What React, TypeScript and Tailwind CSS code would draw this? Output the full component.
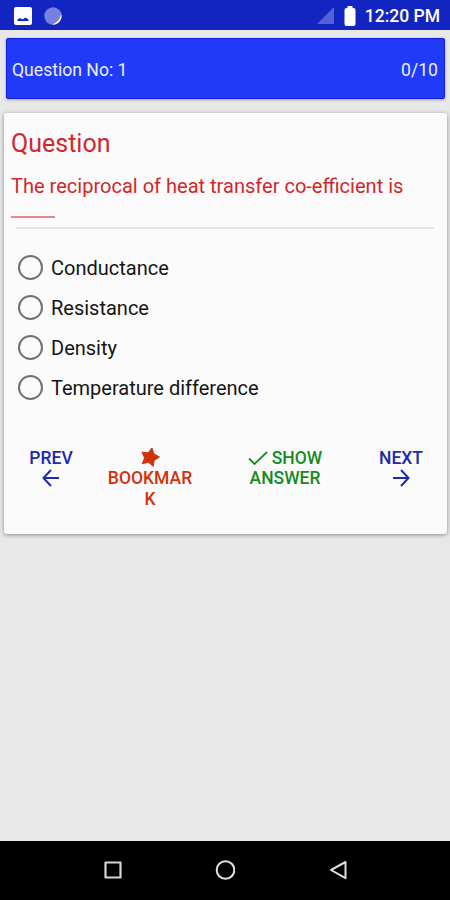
import { useState } from 'react'
import type { ReactNode } from 'react'

const options = [
  'Conductance',
  'Resistance',
  'Density',
  'Temperature difference'
]

function StatusBar() {
  return (
    <div className="flex h-[30px] items-center justify-between bg-[#1325c1] pl-[14px] pr-[10px] text-white">
      <div className="flex items-center gap-[12px] pt-px">
        <svg width="18" height="18" viewBox="0 0 18 18">
          <rect width="18" height="18" rx="2" fill="#fff" />
          <path
            d="M3.500 14V12.500L6 11 8.500 12.500 11.500 10.500 14.500 12.500V14Z"
            fill="#1325c1"
          />
        </svg>
        <svg width="18" height="18" viewBox="0 0 18 18">
          <circle cx="9" cy="9" r="8.700" fill="#7780dc" />
          <path
            d="M17.200 7A8.400 8.400 0 0 1 8 17.500C13 16 15.500 13 17.200 7Z"
            fill="#fff"
          />
        </svg>
      </div>
      <div className="flex items-center pt-px">
        <svg width="17" height="17" viewBox="0 0 17 17">
          <path d="M17 0V17H0Z" fill="#5361d3" />
        </svg>
        <svg width="12" height="20" viewBox="0 0 12 20" className="ml-[10px]">
          <path
            d="M3.500 0H8.500V2H9.500Q11.500 2 11.500 4V18Q11.500 20 9.500 20H2.500Q.5 20 .5 18V4Q.5 2 2.500 2H3.500Z"
            fill="#fff"
          />
        </svg>
        <span className="ml-[9px] text-[17.5px] font-medium leading-5">
          12:20 PM
        </span>
      </div>
    </div>
  )
}

function ActionButton({
  className,
  children
}: {
  className: string
  children: ReactNode
}) {
  return (
    <button
      type="button"
      className={
        'flex flex-col items-center text-[17.5px] font-medium leading-[20.5px] ' +
        className
      }
    >
      {children}
    </button>
  )
}

function NavBar() {
  return (
    <nav className="flex h-[59px] items-center justify-between bg-black px-[103px] pb-px">
      <svg width="20" height="20" viewBox="0 0 20 20" fill="none">
        <rect
          x="2.500"
          y="2.500"
          width="15"
          height="15"
          stroke="#d5d5d5"
          strokeWidth="2.200"
          strokeLinejoin="round"
        />
      </svg>
      <svg width="20" height="20" viewBox="0 0 20 20" fill="none">
        <circle cx="10.500" cy="10" r="8.800" stroke="#e2e2e2" strokeWidth="2" />
      </svg>
      <svg width="20" height="20" viewBox="0 0 20 20" fill="none">
        <path
          d="M18.500 2V18.200L4 10Z"
          stroke="#ddd"
          strokeWidth="2"
          strokeLinejoin="round"
        />
      </svg>
    </nav>
  )
}

export default function App(): JSX.Element {
  const [selected, setSelected] = useState('')

  return (
    <div className="flex h-[900px] w-[450px] flex-col bg-[#e8e8e8] font-['Roboto',sans-serif]">
      <StatusBar />

      <header className="ml-[6px] mr-[5px] mt-[8px] flex h-[61px] items-center justify-between rounded-[2px] border border-[#1020d8] bg-[#203afa] pl-[5px] pr-[6px] pt-[4px] text-[17.6px] text-[#eceeff] shadow-[0_1px_3px_rgba(0,0,0,0.3)]">
        <span>Question No: 1</span>
        <span>0/10</span>
      </header>

      <main className="ml-[4px] mr-[3px] mt-[14px] h-[421px] rounded-[3px] bg-[#fbfbfb] shadow-[0_1px_4px_rgba(0,0,0,0.4)]">
        <div className="pl-[7px] pr-[12px] text-[#d1272c]">
          <h1 className="pt-[15px] text-[25px] leading-8">Question</h1>
          <p className="mt-[11px] whitespace-nowrap text-[20.05px] leading-[31px]">
            The reciprocal of heat transfer co-efficient is
          </p>
          <div className="mt-[13.5px] h-[2px] w-[44px] bg-[#e18b8f]" />
        </div>
        <div className="ml-[12px] mr-[13px] mt-[9.5px] h-[2px] bg-[#e6e6e6]" />

        <div className="mt-[18px] flex flex-col">
          {options.map((option) => (
            <label
              key={option}
              className="flex h-[40px] items-center pl-[14px] text-[20px] text-[#151515]"
            >
              <input
                type="radio"
                name="answer"
                checked={selected === option}
                onChange={() => setSelected(option)}
                className="mr-[8px] size-[25px] appearance-none rounded-full border-2 border-[#707070] checked:border-[7px]"
              />
              <span className="pt-[2px]">{option}</span>
            </label>
          ))}
        </div>

        <div className="mt-[41px] flex items-start">
          <ActionButton className="ml-[17px] w-[60px] text-[#1c2aae]">
            <span>PREV</span>
            <svg
              width="20"
              height="20"
              viewBox="0 0 20 20"
              fill="none"
              className="-mt-px"
            >
              <path
                d="M18 10H2.500M10 2L2.500 10 10 18"
                stroke="currentColor"
                strokeWidth="2"
              />
            </svg>
          </ActionButton>
          <ActionButton className="ml-[20px] w-[98px] text-[#d2320a]">
            <svg
              width="22"
              height="22"
              viewBox="0 0 22 22"
              className="-mt-[2px]"
            >
              <path
                d="M13 2L14.800 7.800 20.500 11 15.200 14.300 14.200 20.300 9.300 16.300 3.300 17.700 5.600 11.900 3 6.200 9.200 6.700Z"
                fill="currentColor"
                stroke="currentColor"
                strokeLinejoin="round"
              />
            </svg>
            <span>BOOKMAR</span>
            <span>K</span>
          </ActionButton>
          <ActionButton className="ml-[36px] w-[100px] text-[#188a20]">
            <span className="flex h-[20px] items-center gap-[4px]">
              <svg width="20" height="16" viewBox="0 0 20 16" fill="none">
                <path
                  d="M1 8.500L6.500 14 19 2"
                  stroke="currentColor"
                  strokeWidth="1.800"
                />
              </svg>
              SHOW
            </span>
            <span>ANSWER</span>
          </ActionButton>
          <ActionButton className="ml-[36px] w-[60px] text-[#1c2aae]">
            <span>NEXT</span>
            <svg
              width="20"
              height="20"
              viewBox="0 0 20 20"
              fill="none"
              className="-mt-px"
            >
              <path
                d="M2 10H17.500M10 2L17.500 10 10 18"
                stroke="currentColor"
                strokeWidth="2"
              />
            </svg>
          </ActionButton>
        </div>
      </main>

      <div className="flex-1" />
      <NavBar />
    </div>
  )
}
